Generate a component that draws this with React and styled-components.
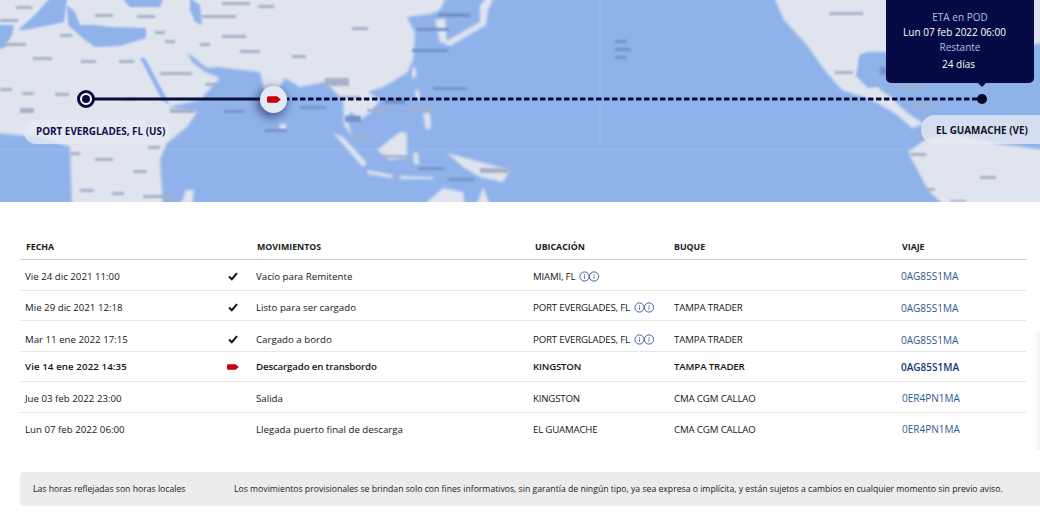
import React from 'react';
import styled, { createGlobalStyle } from 'styled-components';

const GlobalStyle = createGlobalStyle`
    html, body { margin: 0; padding: 0; background: #fff; }
    body { font-family: "Open Sans", "Liberation Sans", sans-serif; color: #151515; }
`;

const Page = styled.div`
    position: relative;
    width: 1040px;
    height: 519px;
    overflow: hidden;
    background: #fff;
`;

const MapArea = styled.div`
    position: relative;
    height: 202px;
    overflow: hidden;
    background: #8fb2ea;
`;

const MapSvg = styled.svg`
    display: block;
    width: 1040px;
    height: 202px;
`;

const PortLabel = styled.div`
    position: absolute;
    left: ${p => p.$left}px;
    right: ${p => p.$right}px;
    top: ${p => p.$top}px;
    height: ${p => p.$height}px;
    display: flex;
    align-items: center;
    padding-left: ${p => p.$inset}px;
    padding-bottom: ${p => p.$lift || 0}px;
    box-sizing: border-box;
    border-radius: 14px 0 0 14px;
    border-top-right-radius: ${p => p.$round ? 14 : 0}px;
    border-bottom-right-radius: ${p => p.$round ? 14 : 0}px;
    background: rgba(232, 234, 241, 0.78);
    font-size: 9.9px;
    font-weight: 700;
    color: ${p => p.$color};
    white-space: nowrap;
`;

const Tooltip = styled.div`
    position: absolute;
    left: 886px;
    top: -10px;
    width: 148px;
    height: 93px;
    box-sizing: border-box;
    padding-top: 20px;
    border-radius: 5px;
    background: #060b45;
    text-align: center;
    &::after {
        content: '';
        position: absolute;
        left: 92px;
        bottom: -4px;
        border-left: 4px solid transparent;
        border-right: 4px solid transparent;
        border-top: 4px solid #060b45;
    }
`;

const TipLine = styled.div`
    height: ${p => p.$height}px;
    line-height: ${p => p.$height}px;
    padding-right: ${p => p.$pull || 0}px;
    font-size: 10px;
    font-weight: ${p => p.$strong ? 500 : 400};
    color: ${p => p.$strong ? '#ffffff' : '#b7bfe8'};
    white-space: nowrap;
`;

const Origin = styled.div`
    position: absolute;
    left: 77px;
    top: 90px;
    width: 18px;
    height: 18px;
    box-sizing: border-box;
    border: 3px solid #080b3e;
    border-radius: 50%;
    background: #fff;
    &::after {
        content: '';
        position: absolute;
        left: 2px;
        top: 2px;
        width: 8px;
        height: 8px;
        border-radius: 50%;
        background: #080b3e;
    }
`;

const ShipBadge = styled.div`
    position: absolute;
    left: 260px;
    top: 86px;
    width: 27px;
    height: 27px;
    display: flex;
    align-items: center;
    justify-content: center;
    border-radius: 50%;
    background: #e4e8f4;
    box-shadow: -2px 3px 9px 2px rgba(25, 35, 90, 0.55);
`;

const Destination = styled.div`
    position: absolute;
    left: 977px;
    top: 94px;
    width: 10px;
    height: 10px;
    border-radius: 50%;
    background: #05082f;
`;

const TableWrap = styled.div`
    padding: 31px 14px 0 20px;
`;

const Row = styled.div`
    display: grid;
    grid-template-columns: 198px 34px 278px 141px 229px 1fr;
    align-items: center;
    height: ${p => p.$height}px;
    box-sizing: border-box;
    padding-top: ${p => p.$shift || 0}px;
    border-bottom: ${p => p.$last ? 'none' : p.$head ? '1.5px solid #c9ccd1' : '1.5px solid #e6e6e6'};
    font-size: 9.7px;
    font-weight: ${p => p.$bold ? 600 : 400};
    white-space: nowrap;
`;

const HeadCell = styled.div`
    padding-left: ${p => p.$inset}px;
    font-size: 8.8px;
    font-weight: 700;
    color: #202020;
`;

const Cell = styled.div`
    display: flex;
    align-items: center;
    gap: 4px;
    padding-left: ${p => p.$inset}px;
    letter-spacing: ${p => p.$tight || 0}px;
`;

const IconCell = styled.div`
    display: flex;
    justify-content: center;
    align-items: center;
    padding-right: 4px;
`;

const VoyageLink = styled.a`
    padding-left: ${p => p.$inset}px;
    font-size: 10px;
    color: ${p => p.$bold ? '#123a6e' : '#2c5a90'};
    text-decoration: none;
`;

const Notice = styled.div`
    display: grid;
    grid-template-columns: 201px 1fr;
    align-items: center;
    margin: 27px 0 0 20px;
    height: 34px;
    padding-left: 13px;
    border-radius: 4px 0 0 4px;
    background: #ececec;
    font-size: 8.66px;
    color: #222;
    white-space: nowrap;
`;

const EdgeShade = styled.div`
    position: absolute;
    right: 0;
    top: 332px;
    width: 6px;
    height: 118px;
    background: linear-gradient(to right, rgba(0, 0, 0, 0), rgba(0, 0, 0, 0.06));
`;

const rows = [
    { date: 'Vie 24 dic 2021 11:00', icon: 'check', move: 'Vacío para Remitente', place: 'MIAMI, FL', info: true, ship: '', voyage: '0AG85S1MA', height: 31, shift: 2 },
    { date: 'Mie 29 dic 2021 12:18', icon: 'check', move: 'Listo para ser cargado', place: 'PORT EVERGLADES, FL', info: true, ship: 'TAMPA TRADER', voyage: '0AG85S1MA', height: 30, shift: 4 },
    { date: 'Mar 11 ene 2022 17:15', icon: 'check', move: 'Cargado a bordo', place: 'PORT EVERGLADES, FL', info: true, ship: 'TAMPA TRADER', voyage: '0AG85S1MA', height: 31, shift: 7 },
    { date: 'Vie 14 ene 2022 14:35', icon: 'ship', move: 'Descargado en transbordo', place: 'KINGSTON', ship: 'TAMPA TRADER', voyage: '0AG85S1MA', height: 30, bold: true },
    { date: 'Jue 03 feb 2022 23:00', move: 'Salida', place: 'KINGSTON', ship: 'CMA CGM CALLAO', voyage: '0ER4PN1MA', height: 31, shift: 2, farther: true },
    { date: 'Lun 07 feb 2022 06:00', move: 'Llegada puerto final de descarga', place: 'EL GUAMACHE', ship: 'CMA CGM CALLAO', voyage: '0ER4PN1MA', height: 32, farther: true, last: true },
];

// smudges that stand for the blurred place names on the base map
const landNames = [
    [16, 6, 16, 3], [0, 19, 18, 3], [60, 34, 12, 3], [2, 43, 24, 3], [33, 57, 19, 3], [81, 60, 15, 3], [119, 60, 15, 3],
    [95, 14, 18, 3], [137, 15, 18, 3], [155, 31, 10, 3], [165, 40, 10, 3], [201, 15, 35, 3], [222, 2, 28, 3], [258, 5, 16, 3],
    [222, 35, 24, 3], [240, 50, 20, 3], [200, 43, 10, 3], [292, 55, 14, 3], [160, 72, 32, 3], [205, 83, 12, 3],
    [0, 88, 12, 3], [22, 92, 12, 3], [55, 93, 14, 3], [20, 108, 14, 5], [122, 98, 14, 2], [170, 109, 24, 4],
    [145, 121, 16, 3], [148, 146, 12, 3], [70, 152, 10, 3], [95, 158, 18, 3], [133, 170, 14, 3], [80, 189, 14, 3],
    [112, 192, 12, 3], [143, 195, 32, 3], [352, 27, 16, 3], [325, 78, 24, 8], [340, 96, 20, 2], [367, 109, 22, 3],
    [350, 136, 22, 3], [382, 155, 26, 3], [408, 108, 26, 3], [480, 168, 30, 5], [829, 12, 34, 3], [835, 71, 18, 3],
    [915, 105, 20, 3], [900, 85, 24, 3], [915, 135, 16, 3], [1000, 122, 22, 3], [910, 153, 16, 3], [980, 176, 16, 3],
    [925, 188, 10, 3], [950, 200, 16, 2],
];

const waterNames = [
    [438, 13, 32, 4], [417, 28, 32, 3], [412, 49, 36, 3], [433, 87, 34, 3], [300, 106, 26, 3], [385, 99, 20, 5],
    [345, 116, 16, 6], [418, 167, 26, 3], [448, 178, 26, 3], [224, 110, 20, 3], [265, 129, 22, 3], [880, 67, 10, 8],
    [615, 40, 12, 3], [615, 48, 16, 3], [615, 56, 12, 3],
];

function WorldMap() {
    return (
        <MapSvg viewBox="0 0 1040 202" aria-hidden="true">
            <defs>
                <filter id="soft" x="-5%" y="-5%" width="110%" height="110%">
                    <feGaussianBlur stdDeviation="1.6" />
                </filter>
                <filter id="softer" x="-5%" y="-5%" width="110%" height="110%">
                    <feGaussianBlur stdDeviation="1.2" />
                </filter>
            </defs>
            <path d="M600 0 V150 M0 150 H920" stroke="#a5c2ef" strokeWidth="1" fill="none" opacity="0.6" />
            <g fill="#e0e4ef" filter="url(#soft)">
                {/* Europe, Africa, Asia */}
                <path d="M-5 -5 L447 -5 L440 10 L430 14 L407 17 L415 33 L413 60 L407 73 L383 87 L368 92 L380 100 L370 113 L360 120 L351 112 L347 118 L352 136 L344 125 L343 100 L325 82 L300 87 L285 78 L272 100 L268 110 L260 72 L217 67 L207 68 L187 52 L192 62 L205 72 L220 78 L200 100 L168 107 L197 112 L187 127 L167 143 L160 160 L163 207 L72 207 L70 147 L40 137 L-5 133 Z" />
                {/* Korea, Japan */}
                <path d="M435 20 L445 18 L447 43 L440 43 Z" />
                <path d="M443 43 L480 22 L480 5 L490 -5 L495 -5 L488 10 L486 25 L450 46 Z" />
                {/* Sri Lanka, Taiwan, Philippines */}
                <circle cx="283" cy="127" r="3.5" />
                <path d="M412 68 L416 68 L416 78 L412 78 Z" />
                <path d="M415 90 L419 90 L420 100 L416 100 Z" />
                <path d="M423 113 L430 113 L431 128 L426 130 Z" />
                {/* Indonesia */}
                <path d="M333 133 L343 137 L367 163 L363 167 Z" />
                <path d="M377 150 L400 132 L407 133 L407 157 L390 160 Z" />
                <path d="M367 170 L393 175 L392 178 L368 174 Z" />
                <path d="M400 176 L433 177 L433 179 L400 179 Z" />
                <path d="M413 153 L418 153 L419 164 L414 164 Z" />
                {/* New Guinea, Australia, Madagascar */}
                <path d="M447 153 L473 160 L510 170 L503 182 L480 177 L463 167 Z" />
                <path d="M421 207 L443 188 L463 192 L465 207 Z" />
                <path d="M476 207 L483 187 L491 207 Z" />
                <path d="M180 207 L186 190 L194 190 L192 207 Z" />
                {/* Americas */}
                <path d="M773 -5 L784 20 L806 44 L826 72 L842 90 L872 100 L896 114 L912 128 L924 124 L906 112 L890 96 L880 90 L874 78 L858 60 L866 52 L892 52 L912 60 L960 60 L960 -5 Z" />
                <path d="M908 152 L925 140 L950 134 L1000 144 L1045 150 L1045 207 L945 207 L928 190 Z" />
                <path d="M1018 -5 L1045 -5 L1045 42 L1020 48 Z" />
            </g>
            <g fill="#8fb2ea" filter="url(#softer)">
                {/* Atlantic, western Mediterranean, Mediterranean */}
                <path d="M-5 25 L14 25 L12 35 L4 48 L-5 50 Z" />
                <path d="M18 30 L35 15 L50 -2 L67 -2 L64 22 L50 25 L25 30 Z" />
                <path d="M67 5 L75 12 L80 25 L95 25 L110 27 L146 28 L146 38 L120 46 L95 47 L85 40 L68 25 Z" />
                {/* Black Sea, Caspian, Red Sea */}
                <path d="M122 -2 L163 -2 L160 7 L130 7 Z" />
                <path d="M190 -2 L200 5 L202 25 L195 22 L190 10 Z" />
                <path d="M140 58 L145 58 L170 105 L162 100 Z" />
                {/* Gulf of Mexico */}
                <path d="M860 54 L856 76 L868 88 L886 86 L872 72 L888 56 Z" />
            </g>
            <g fill="#a6b0c6" filter="url(#softer)">
                {landNames.map(([x, y, w, h], i) => (
                    <rect key={i} x={x} y={y} width={w} height={h} />
                ))}
            </g>
            <g fill="#7492c9" filter="url(#softer)">
                {waterNames.map(([x, y, w, h], i) => (
                    <rect key={i} x={x} y={y} width={w} height={h} />
                ))}
            </g>
            <path d="M86 99 H270" stroke="#080b3e" strokeWidth="3" fill="none" />
            <path d="M284 99 H980" stroke="#080b3e" strokeWidth="3" strokeDasharray="5.5 2.5" fill="none" />
        </MapSvg>
    );
}

function ShipIcon({ width, height }) {
    return (
        <svg width={width} height={height} viewBox="0 0 14 7" aria-hidden="true">
            <path d="M1.6 0.2 H10 L13.8 3.5 L10 6.8 H1.6 Q0 6.8 0 5.2 V1.8 Q0 0.2 1.6 0.2 Z" fill="#c8000c" />
        </svg>
    );
}

function CheckIcon() {
    return (
        <svg width="10" height="9" viewBox="0 0 10 9" aria-hidden="true">
            <path d="M1 4.6 L3.8 7.2 L9 1.2" stroke="#14142a" strokeWidth="2" fill="none" />
        </svg>
    );
}

function InfoPair() {
    return (
        <svg width="21" height="11" viewBox="0 0 21 11" aria-hidden="true">
            <g fill="#fff" stroke="#30508e" strokeWidth="0.9">
                <circle cx="5.5" cy="5.5" r="4.6" />
                <circle cx="15" cy="5.5" r="4.6" />
            </g>
            <g fill="#6d7fa8">
                <rect x="5" y="4.6" width="1" height="3.2" />
                <rect x="5" y="3" width="1" height="1" />
                <rect x="14.5" y="4.6" width="1" height="3.2" />
                <rect x="14.5" y="3" width="1" height="1" />
            </g>
        </svg>
    );
}

function MovementRow({ row }) {
    return (
        <Row $height={row.height} $bold={row.bold} $shift={row.shift} $last={row.last}>
            <Cell $inset={5} $tight={row.bold ? 0.1 : 0}>{row.date}</Cell>
            <IconCell>
                {row.icon === 'check' && <CheckIcon />}
                {row.icon === 'ship' && <ShipIcon width={12} height={6} />}
            </IconCell>
            <Cell $inset={4} $tight={row.bold ? -0.15 : 0}>{row.move}</Cell>
            <Cell $inset={3} $tight={-0.2}>
                {row.place}
                {row.info && <InfoPair />}
            </Cell>
            <Cell $inset={3} $tight={-0.15}>{row.ship}</Cell>
            <VoyageLink href="#" $inset={row.farther ? 2 : 1} $bold={row.bold}>{row.voyage}</VoyageLink>
        </Row>
    );
}

export default function App() {
    return (
        <Page>
            <GlobalStyle />
            <MapArea>
                <WorldMap />
                <Origin />
                <ShipBadge><ShipIcon width={14} height={7} /></ShipBadge>
                <Destination />
                <PortLabel $left={24} $right={869} $top={120} $height={24} $inset={12} $lift={2} $color="#0d1150" $round>
                    PORT EVERGLADES, FL (US)
                </PortLabel>
                <PortLabel $left={921} $right={0} $top={115} $height={29} $inset={15} $color="#11131f">
                    EL GUAMACHE (VE)
                </PortLabel>
                <Tooltip>
                    <TipLine $height={15}>ETA en POD</TipLine>
                    <TipLine $height={15} $pull={11} $strong>Lun 07 feb 2022 06:00</TipLine>
                    <TipLine $height={14}>Restante</TipLine>
                    <TipLine $height={20} $pull={3} $strong>24 días</TipLine>
                </Tooltip>
            </MapArea>
            <TableWrap>
                <Row $height={27} $head $shift={2}>
                    <HeadCell $inset={6}>FECHA</HeadCell>
                    <div />
                    <HeadCell $inset={5}>MOVIMIENTOS</HeadCell>
                    <HeadCell $inset={5}>UBICACIÓN</HeadCell>
                    <HeadCell $inset={3}>BUQUE</HeadCell>
                    <HeadCell $inset={2}>VIAJE</HeadCell>
                </Row>
                {rows.map(row => <MovementRow key={row.date} row={row} />)}
            </TableWrap>
            <Notice>
                <span>Las horas reflejadas son horas locales</span>
                <span>Los movimientos provisionales se brindan solo con fines informativos, sin garantía de ningún tipo, ya sea expresa o implícita, y están sujetos a cambios en cualquier momento sin previo aviso.</span>
            </Notice>
            <EdgeShade />
        </Page>
    );
}
